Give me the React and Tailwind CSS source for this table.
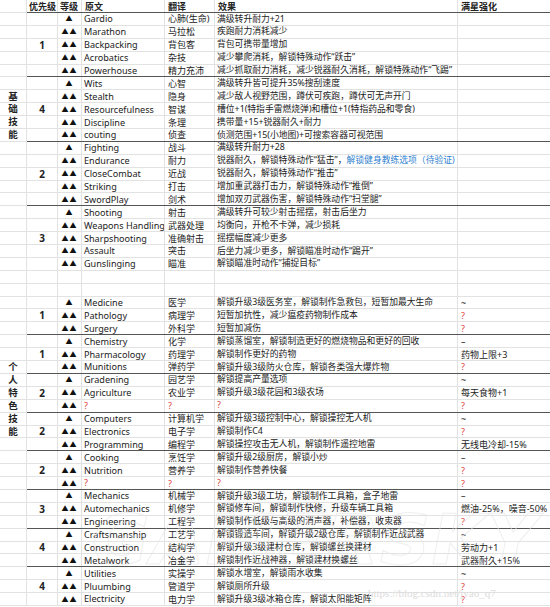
import React from 'react'

// one entry per sheet row: [cat, pri, lvl, en, zh, effect, star, groupStart, blueTail]
const rows = [
  ['', '', 1, 'Gardio', '心肺(生命)', '满级转升耐力+21', '', true],
  ['', '', 2, 'Marathon', '马拉松', '疾跑耐力消耗减少', ''],
  ['', '1', 2, 'Backpacking', '背包客', '背包可携带量增加', ''],
  ['', '', 2, 'Acrobatics', '杂技', '减少攀爬消耗，解锁特殊动作“跃击”', ''],
  ['', '', 2, 'Powerhouse', '精力充沛', '减少抓取耐力消耗，减少锐器耐久消耗，解锁特殊动作“飞踢”', ''],
  ['', '', 1, 'Wits', '心智', '满级转升皆可提升35%搜刮速度', '', true],
  ['基', '', 2, 'Stealth', '隐身', '减少敌人视野范围，蹲伏可疾跑，蹲伏可无声开门', ''],
  ['础', '4', 2, 'Resourcefulness', '智谋', '槽位+1(特指手雷燃烧弹)和槽位+1(特指药品和零食)', ''],
  ['技', '', 2, 'Discipline', '条理', '携带量+15+锐器耐久+耐力', ''],
  ['能', '', 2, 'couting', '侦查', '侦测范围+15(小地图)+可搜索容器可视范围', ''],
  ['', '', 1, 'Fighting', '战斗', '满级转升耐力+28', '', true],
  ['', '', 2, 'Endurance', '耐力', '锐器耐久，解锁特殊动作“猛击”，', '', false, '解锁健身教练选项（待验证)'],
  ['', '2', 2, 'CloseCombat', '近战', '锐器耐久，解锁特殊动作“推击”', ''],
  ['', '', 2, 'Striking', '打击', '增加重武器打击力，解锁特殊动作“推倒”', ''],
  ['', '', 2, 'SwordPlay', '剑术', '增加双刃武器伤害，解锁特殊动作“扫堂腿”', ''],
  ['', '', 1, 'Shooting', '射击', '满级转升可较少射击摇摆，射击后坐力', '', true],
  ['', '', 2, 'Weapons Handling', '武器处理', '均衡向，开枪不卡弹，减少损耗', ''],
  ['', '3', 2, 'Sharpshooting', '准确射击', '摇摆幅度减少更多', ''],
  ['', '', 2, 'Assault', '突击', '后坐力减少更多，解锁瞄准时动作“踢开”', ''],
  ['', '', 2, 'Gunslinging', '瞄准', '解锁瞄准时动作“捕捉目标”', ''],
  ['', '', 0, '', '', '', ''],
  ['', '', 0, '', '', '', ''],
  ['', '', 1, 'Medicine', '医学', '解锁升级3级医务室，解锁制作急救包，短暂加最大生命', '~'],
  ['', '1', 2, 'Pathology', '病理学', '短暂加抗性，减少瘟疫药物制作成本', '?'],
  ['', '', 2, 'Surgery', '外科学', '短暂加减伤', '?'],
  ['', '', 1, 'Chemistry', '化学', '解锁蒸馏室，解锁制造更好的燃烧物品和更好的回收', '–', true],
  ['', '1', 2, 'Pharmacology', '药理学', '解锁制作更好的药物', '药物上限+3'],
  ['个', '', 2, 'Munitions', '弹药学', '解锁升级3级防火仓库，解锁各类强大爆炸物', '?'],
  ['人', '', 1, 'Gradening', '园艺学', '解锁提高产量选项', '~', true],
  ['特', '2', 2, 'Agriculture', '农业学', '解锁升级3级花园和3级农场', '每天食物+1'],
  ['色', '', 2, '?', '?', '?', '?'],
  ['技', '', 1, 'Computers', '计算机学', '解锁升级3级控制中心，解锁操控无人机', '~', true],
  ['能', '2', 2, 'Electronics', '电子学', '解锁制作C4', '?'],
  ['', '', 2, 'Programming', '编程学', '解锁操控攻击无人机，解锁制作遥控地雷', '无线电冷却-15%'],
  ['', '', 1, 'Cooking', '烹饪学', '解锁升级2级厨房，解锁小炒', '–', true],
  ['', '2', 2, 'Nutrition', '营养学', '解锁制作营养快餐', '?'],
  ['', '', 2, '?', '?', '?', '?'],
  ['', '', 1, 'Mechanics', '机械学', '解锁升级3级工坊，解锁制作工具箱，盒子地雷', '–', true],
  ['', '3', 2, 'Automechanics', '机修学', '解锁修车间，解锁制作快修，升级车辆工具箱', '燃油-25%，噪音-50%'],
  ['', '', 2, 'Engineering', '工程学', '解锁制作低级与高级的消声器，补偿器，收束器', '?'],
  ['', '', 1, 'Craftsmanship', '工艺学', '解锁锻造车间，解锁升级2级仓库，解锁制作近战武器', '~', true],
  ['', '4', 2, 'Construction', '结构学', '解锁升级3级建材仓库，解锁螺丝换建材', '劳动力+1'],
  ['', '', 2, 'Metalwork', '冶金学', '解锁制作近战神器，解锁建材换螺丝', '武器耐久+15%'],
  ['', '', 1, 'Utilities', '实操学', '解锁水增室，解锁雨水收集', '~', true],
  ['', '4', 2, 'Pluumbing', '管道学', '解锁厕所升级', '?'],
  ['', '', 2, 'Electricity', '电力学', '解锁升级3级冰箱仓库，解锁太阳能矩阵', '?'],
]

const font = { fontFamily: '"Noto Sans", "Noto Sans CJK SC", sans-serif' }

const Q = ({ v }) =>
  v === '?' ? <span className="text-[#e03c3c]">?</span> : v

const App = () => {
  return (
    <div className="relative w-[550px] h-[607px] overflow-hidden bg-white text-[9px] text-[#222] leading-none" style={font}>
      <div className="flex h-[13px] font-bold text-[9px]">
        <div className="w-[27px] shrink-0 border-b border-r border-[#e2e2e2]"></div>
        <div className="flex w-[523px] shrink-0 border-b border-[#555]">
          <div className="w-[31px] shrink-0 pl-[2px] border-r border-[#e2e2e2] flex items-center whitespace-nowrap">优先级</div>
          <div className="w-[24px] shrink-0 pl-[2px] border-r border-[#e2e2e2] flex items-center whitespace-nowrap">等级</div>
          <div className="w-[83px] shrink-0 pl-[3px] border-r border-[#e2e2e2] flex items-center">原文</div>
          <div className="w-[50px] shrink-0 pl-[3px] border-r border-[#e2e2e2] flex items-center">翻译</div>
          <div className="w-[243px] shrink-0 pl-[3px] border-r border-[#e2e2e2] flex items-center">效果</div>
          <div className="w-[92px] shrink-0 pl-[3px] flex items-center">满星强化</div>
        </div>
      </div>
      {rows.map((r, i) => {
        const next = rows[i + 1]
        const dark = next && next[7]
        const line = dark ? 'border-[#555]' : 'border-[#e2e2e2]'
        return (
          <div key={i} className="flex h-[12.9px]">
            <div className="w-[27px] shrink-0 border-b border-r border-[#e2e2e2] flex items-center justify-center font-bold text-[9.5px]">{r[0]}</div>
            <div className={'flex w-[523px] shrink-0 border-b ' + line}>
              <div className="w-[31px] shrink-0 border-r border-[#e2e2e2] flex items-center justify-center font-bold text-[10px]">{r[1]}</div>
              <div className="w-[24px] shrink-0 border-r border-[#e2e2e2] flex items-center justify-center text-[7px] tracking-[1px] text-[#111]">
                {r[2] === 1 ? '▲' : r[2] === 2 ? '▲▲' : ''}
              </div>
              <div className="w-[83px] shrink-0 min-w-0 pl-[2px] border-r border-[#e2e2e2] flex items-center text-[9.1px] whitespace-nowrap overflow-hidden"><Q v={r[3]} /></div>
              <div className="w-[50px] shrink-0 min-w-0 pl-[3px] border-r border-[#e2e2e2] flex items-center text-[9px] whitespace-nowrap overflow-hidden"><Q v={r[4]} /></div>
              <div className="w-[243px] shrink-0 min-w-0 pl-[2px] border-r border-[#e2e2e2] flex items-center text-[8.8px] whitespace-nowrap overflow-hidden">
                <Q v={r[5]} />
                {r[8] && <span className="text-[#2f7fd0]">{r[8]}</span>}
              </div>
              <div className="w-[92px] shrink-0 min-w-0 pl-[3px] flex items-center text-[9px] whitespace-nowrap overflow-hidden"><Q v={r[6]} /></div>
            </div>
          </div>
        )
      })}
      <div className="pointer-events-none absolute left-[92px] top-[505px] text-[70px] leading-none font-black italic tracking-[1px] text-transparent [-webkit-text-stroke:1px_#e6e6e6] opacity-60" style={{ fontFamily: '"DejaVu Sans", sans-serif' }}>
        GAMERSKY
      </div>
      <div className="pointer-events-none absolute left-[368px] top-[588px] text-[11px] text-[#dcdcdc]" style={{ fontFamily: '"Liberation Serif", serif' }}>
        https://blog.csdn.net/jyao_q7
      </div>
    </div>
  )
}

export default App
